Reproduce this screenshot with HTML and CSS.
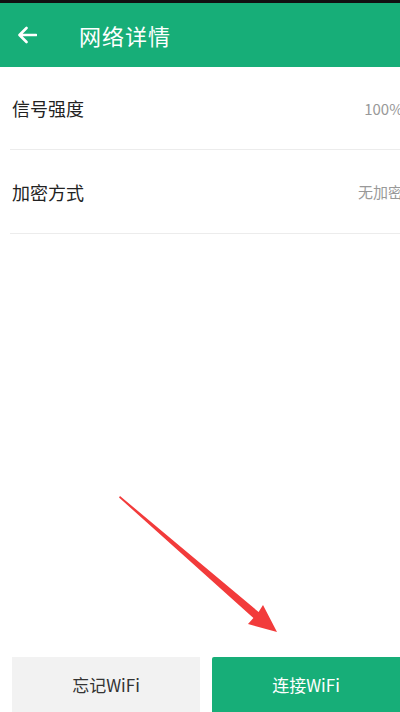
FILE: index.html
```html
<!DOCTYPE html>
<html lang="zh-CN">
<head>
	<meta charset="utf-8">
	<title>网络详情</title>
	<link rel="stylesheet" href="styles.css">
</head>
<body>
<div id="page">
	<header class="topbar">
		<svg class="back" width="20" height="18" viewBox="0 0 20 18">
			<path d="M19 9H3M9.5 2L2.5 9l7 7" fill="none" stroke="#fff" stroke-width="2.6" stroke-linecap="round" stroke-linejoin="round"/>
		</svg>
		<h1>网络详情</h1>
	</header>

	<div class="row">
		<span class="label">信号强度</span><span class="value">100%</span>
	</div>
	<div class="row">
		<span class="label">加密方式</span><span class="value">无加密</span>
	</div>

	<div class="spacer"></div>

	<div class="actions">
		<button class="btn btn-gray">忘记WiFi</button>
		<button class="btn btn-green">连接WiFi</button>
	</div>

	<svg class="mark" width="400" height="712" viewBox="0 0 400 712">
		<polygon points="120,496 258.6,612 263,605 277,632 248,624 253.4,618 119,497.5" fill="#f23b3b"/>
	</svg>
</div>
</body>
</html>
```

FILE: styles.css
```css
html, body {
	margin: 0;
	padding: 0;
	background-color: white;
	font-family: "Noto Sans CJK SC", "Noto Sans", sans-serif;
}
#page {
	position: relative;
	width: 400px;
	height: 712px;
	overflow: hidden;
	display: flex;
	flex-direction: column;
	border-top: solid 3px #111;
	box-sizing: border-box;
}
.topbar {
	height: 64px;
	flex: none;
	display: flex;
	align-items: center;
	background-color: #17ae78;
	padding-left: 17px;
}
.back { flex: none; }
.topbar h1 {
	margin: 0 0 0 42px;
	font-size: 22px;
	font-weight: normal;
	color: white;
	letter-spacing: 1px;
}
.row {
	height: 83px;
	margin-left: 10px;
	margin-right: -3px;
	display: flex;
	align-items: center;
	justify-content: space-between;
	border-bottom: solid 1px #ececec;
	flex: none;
}
.row:first-of-type { height: 82px; }
.label {
	font-size: 18px;
	color: #222;
	padding-left: 2px;
}
.value {
	font-size: 15px;
	color: #999;
}
.spacer { flex: 1; }
.actions {
	flex: none;
	display: flex;
	gap: 12px;
	padding: 0 0 0 12px;
	height: 55px;
}
.btn {
	flex: 1;
	border: none;
	font-family: "Noto Sans CJK SC", "Noto Sans", sans-serif;
	font-size: 17px;
	margin: 0;
}
.btn-gray {
	background-color: #f2f2f2;
	color: #333;
}
.btn-green {
	background-color: #17ae78;
	color: white;
	border-radius: 2px 0 0 0;
}
.mark {
	position: absolute;
	left: 0;
	top: -3px;
	pointer-events: none;
}
```
